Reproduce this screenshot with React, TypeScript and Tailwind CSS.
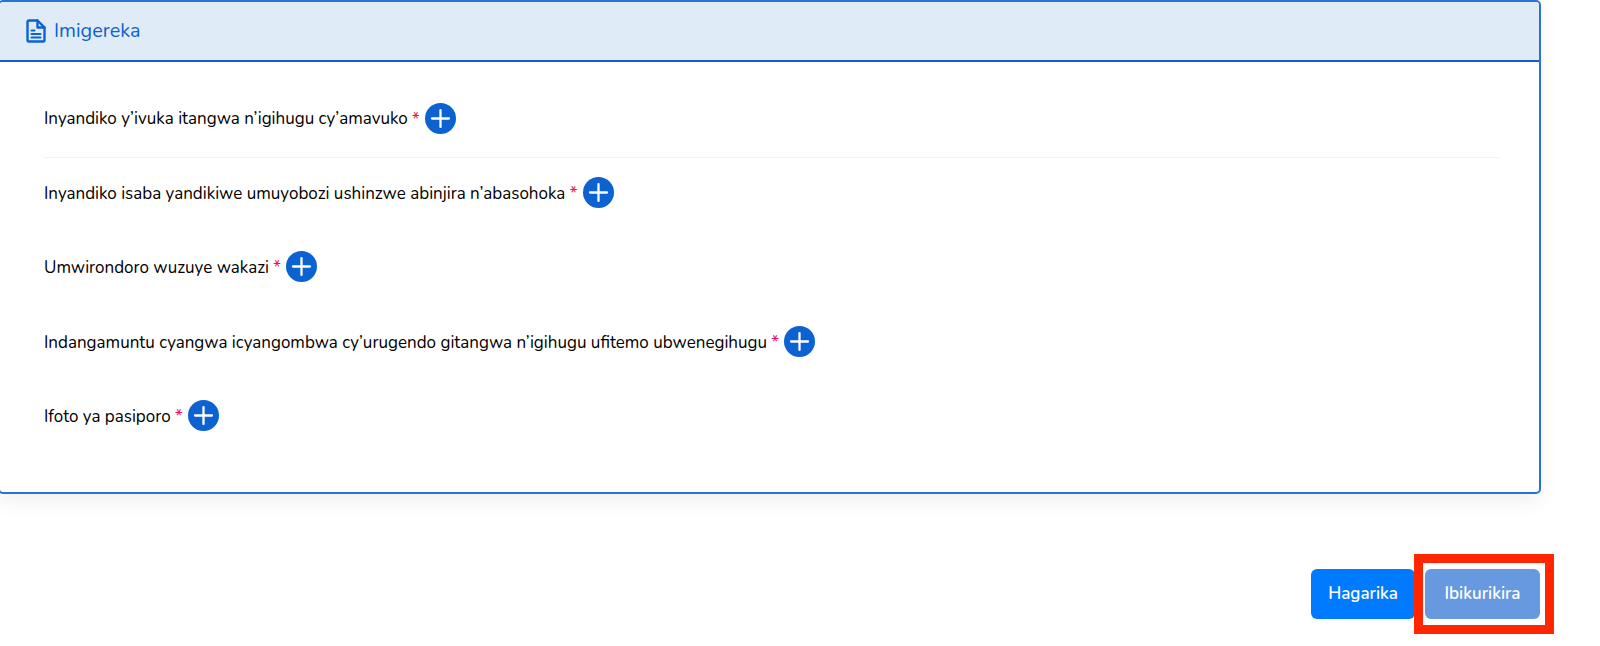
import { Plus } from "lucide-react";

const rows = [
  "Inyandiko y’ivuka itangwa n’igihugu cy’amavuko",
  "Inyandiko isaba yandikiwe umuyobozi ushinzwe abinjira n’abasohoka",
  "Umwirondoro wuzuye wakazi",
  "Indangamuntu cyangwa icyangombwa cy’urugendo gitangwa n’igihugu ufitemo ubwenegihugu",
  "Ifoto ya pasiporo",
];

function FileIcon() {
  return (
    <svg width="20" height="24" viewBox="0 0 20 24" fill="none" stroke="#0b62d0" strokeWidth="2.4" strokeLinejoin="round" strokeLinecap="round">
      <path d="M3 1.5h8.5l7 7V21a1.5 1.5 0 0 1-1.5 1.5H3A1.5 1.5 0 0 1 1.5 21V3A1.5 1.5 0 0 1 3 1.5z" />
      <path d="M11.5 1.5v7h7" />
      <path d="M5.5 11.5h3M5.5 15h9M5.5 18.5h9" strokeWidth="2" />
    </svg>
  );
}

export default function App() {
  return (
    <div className="h-[646px] w-[1600px] overflow-hidden bg-white font-['Nunito','Noto_Sans',sans-serif] text-[17px] text-black">
      <div className="-ml-[2px] h-[494px] w-[1543px] overflow-hidden rounded-[5px] border-2 border-[#2a72d8] bg-white shadow-[0_8px_20px_rgba(0,0,0,0.06)]">
        <div className="flex h-[60px] items-center gap-[8px] border-b-2 border-[#0e5fcc] bg-[#e0ebf8] pl-[26px] text-[19.8px] text-[#0b62d0]">
          <FileIcon />
          <span>Imigereka</span>
        </div>
        <div className="flex flex-col pl-[44px] pr-[40px] pt-[19px]">
          {rows.map((label, i) => (
            <div
              key={label}
              className={
                i === 0
                  ? "flex h-[77px] items-center gap-[5px] border-b border-[#f2f2f2] pb-[2px]"
                  : i === 1
                    ? "-mt-[3px] flex h-[74.5px] items-center gap-[5px]"
                    : "flex h-[74.5px] items-center gap-[5px]"
              }
            >
              <span className="mt-[2px]">{label}</span>
              <span className="mt-[2px] -ml-[1px] text-[18px] text-[#f0134d]">*</span>
              <span className="flex h-[31px] w-[31px] items-center justify-center rounded-full bg-[#0b62d0]">
                <Plus className="h-[29px] w-[29px] text-white" strokeWidth={1.9} />
              </span>
            </div>
          ))}
        </div>
      </div>
      <div className="mt-[75px] flex justify-end gap-[10px] pr-[60px]">
        <button className="h-[50px] w-[104px] rounded-[6px] bg-[#007bff] text-[17px] font-semibold text-white">Hagarika</button>
        <div className="relative">
          <button className="h-[50px] w-[115px] rounded-[6px] bg-[#6699e0] text-[17px] font-semibold text-white">Ibikurikira</button>
          <div className="absolute -left-[11px] -right-[14px] -top-[15px] -bottom-[15px] border-[9px] border-[#ff2600]" />
        </div>
      </div>
    </div>
  );
}
